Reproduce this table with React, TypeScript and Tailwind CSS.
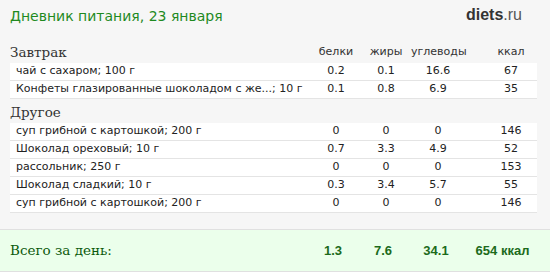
type Item = {
  name: string;
  p: string;
  f: string;
  c: string;
  kcal: string;
};

type Meal = {
  title: string;
  items: Item[];
};

const meals: Meal[] = [
  {
    title: "Завтрак",
    items: [
      { name: "чай с сахаром; 100 г", p: "0.2", f: "0.1", c: "16.6", kcal: "67" },
      {
        name: "Конфеты глазированные шоколадом с же...; 10 г",
        p: "0.1",
        f: "0.8",
        c: "6.9",
        kcal: "35",
      },
    ],
  },
  {
    title: "Другое",
    items: [
      { name: "суп грибной с картошкой; 200 г", p: "0", f: "0", c: "0", kcal: "146" },
      { name: "Шоколад ореховый; 10 г", p: "0.7", f: "3.3", c: "4.9", kcal: "52" },
      { name: "рассольник; 250 г", p: "0", f: "0", c: "0", kcal: "153" },
      { name: "Шоколад сладкий; 10 г", p: "0.3", f: "3.4", c: "5.7", kcal: "55" },
      { name: "суп грибной с картошкой; 200 г", p: "0", f: "0", c: "0", kcal: "146" },
    ],
  },
];

const sans = "font-['DejaVu_Sans',sans-serif]";
const serif = "font-['DejaVu_Serif',serif]";

const App = () => {
  return (
    <div className="w-[550px] h-[272px] bg-[#f6f6f6] flex flex-col overflow-hidden">
      <div className="h-[41px] flex items-start justify-between pl-[10px] pr-[28px] pt-[7px]">
        <h1 className={`${sans} text-[14px] leading-[18px] text-[#1f8a1f]`}>
          Дневник питания, 23 января
        </h1>
        <div className="font-['Liberation_Sans',sans-serif] text-[16px] leading-[18px] text-[#333] mt-[-1px]">
          <span className="font-bold">diets</span>
          <span className="text-[#555]">.ru</span>
        </div>
      </div>

      <div className="flex flex-col gap-[2px] pl-[10px] pr-[13px]">
        {meals.map((meal, i) => (
          <div key={meal.title}>
            <div className="h-[22px] flex items-center">
              <div className={`${serif} flex-1 text-[13.5px] leading-[22px] text-[#333]`}>
                {meal.title}
              </div>
              {i === 0 && (
                <div className={`${sans} flex text-[11px] text-[#333] text-center leading-[14px]`}>
                  <div className="w-[50px]">белки</div>
                  <div className="w-[50px]">жиры</div>
                  <div className="w-[54px]">углеводы</div>
                  <div className="w-[52px] ml-[20px]">ккал</div>
                </div>
              )}
            </div>
            {meal.items.map((item, j) => (
              <div
                key={j}
                className={`${sans} h-[18px] flex items-center bg-white border-b border-[#e4e4e4] text-[11px] text-[#222]`}
              >
                <div className="flex-1 pl-[6px] whitespace-nowrap overflow-hidden">{item.name}</div>
                <div className="w-[50px] text-center">{item.p}</div>
                <div className="w-[50px] text-center">{item.f}</div>
                <div className="w-[54px] text-center">{item.c}</div>
                <div className="w-[52px] ml-[20px] text-center">{item.kcal}</div>
              </div>
            ))}
          </div>
        ))}
      </div>

      <div className="mt-auto h-[43px] bg-[#ebffeb] border-t border-b border-[#e0e0e0] flex items-center pl-[10px] pr-[9px]">
        <div className={`${serif} flex-1 text-[13.5px] text-[#0b5a0b]`}>Всего за день:</div>
        <div className="font-['Liberation_Sans',sans-serif] font-bold text-[13px] text-[#1c6b1c] flex text-center">
          <div className="w-[50px]">1.3</div>
          <div className="w-[50px]">7.6</div>
          <div className="w-[56px]">34.1</div>
          <div className="w-[77px]">654 ккал</div>
        </div>
      </div>
    </div>
  );
};

export default App;
